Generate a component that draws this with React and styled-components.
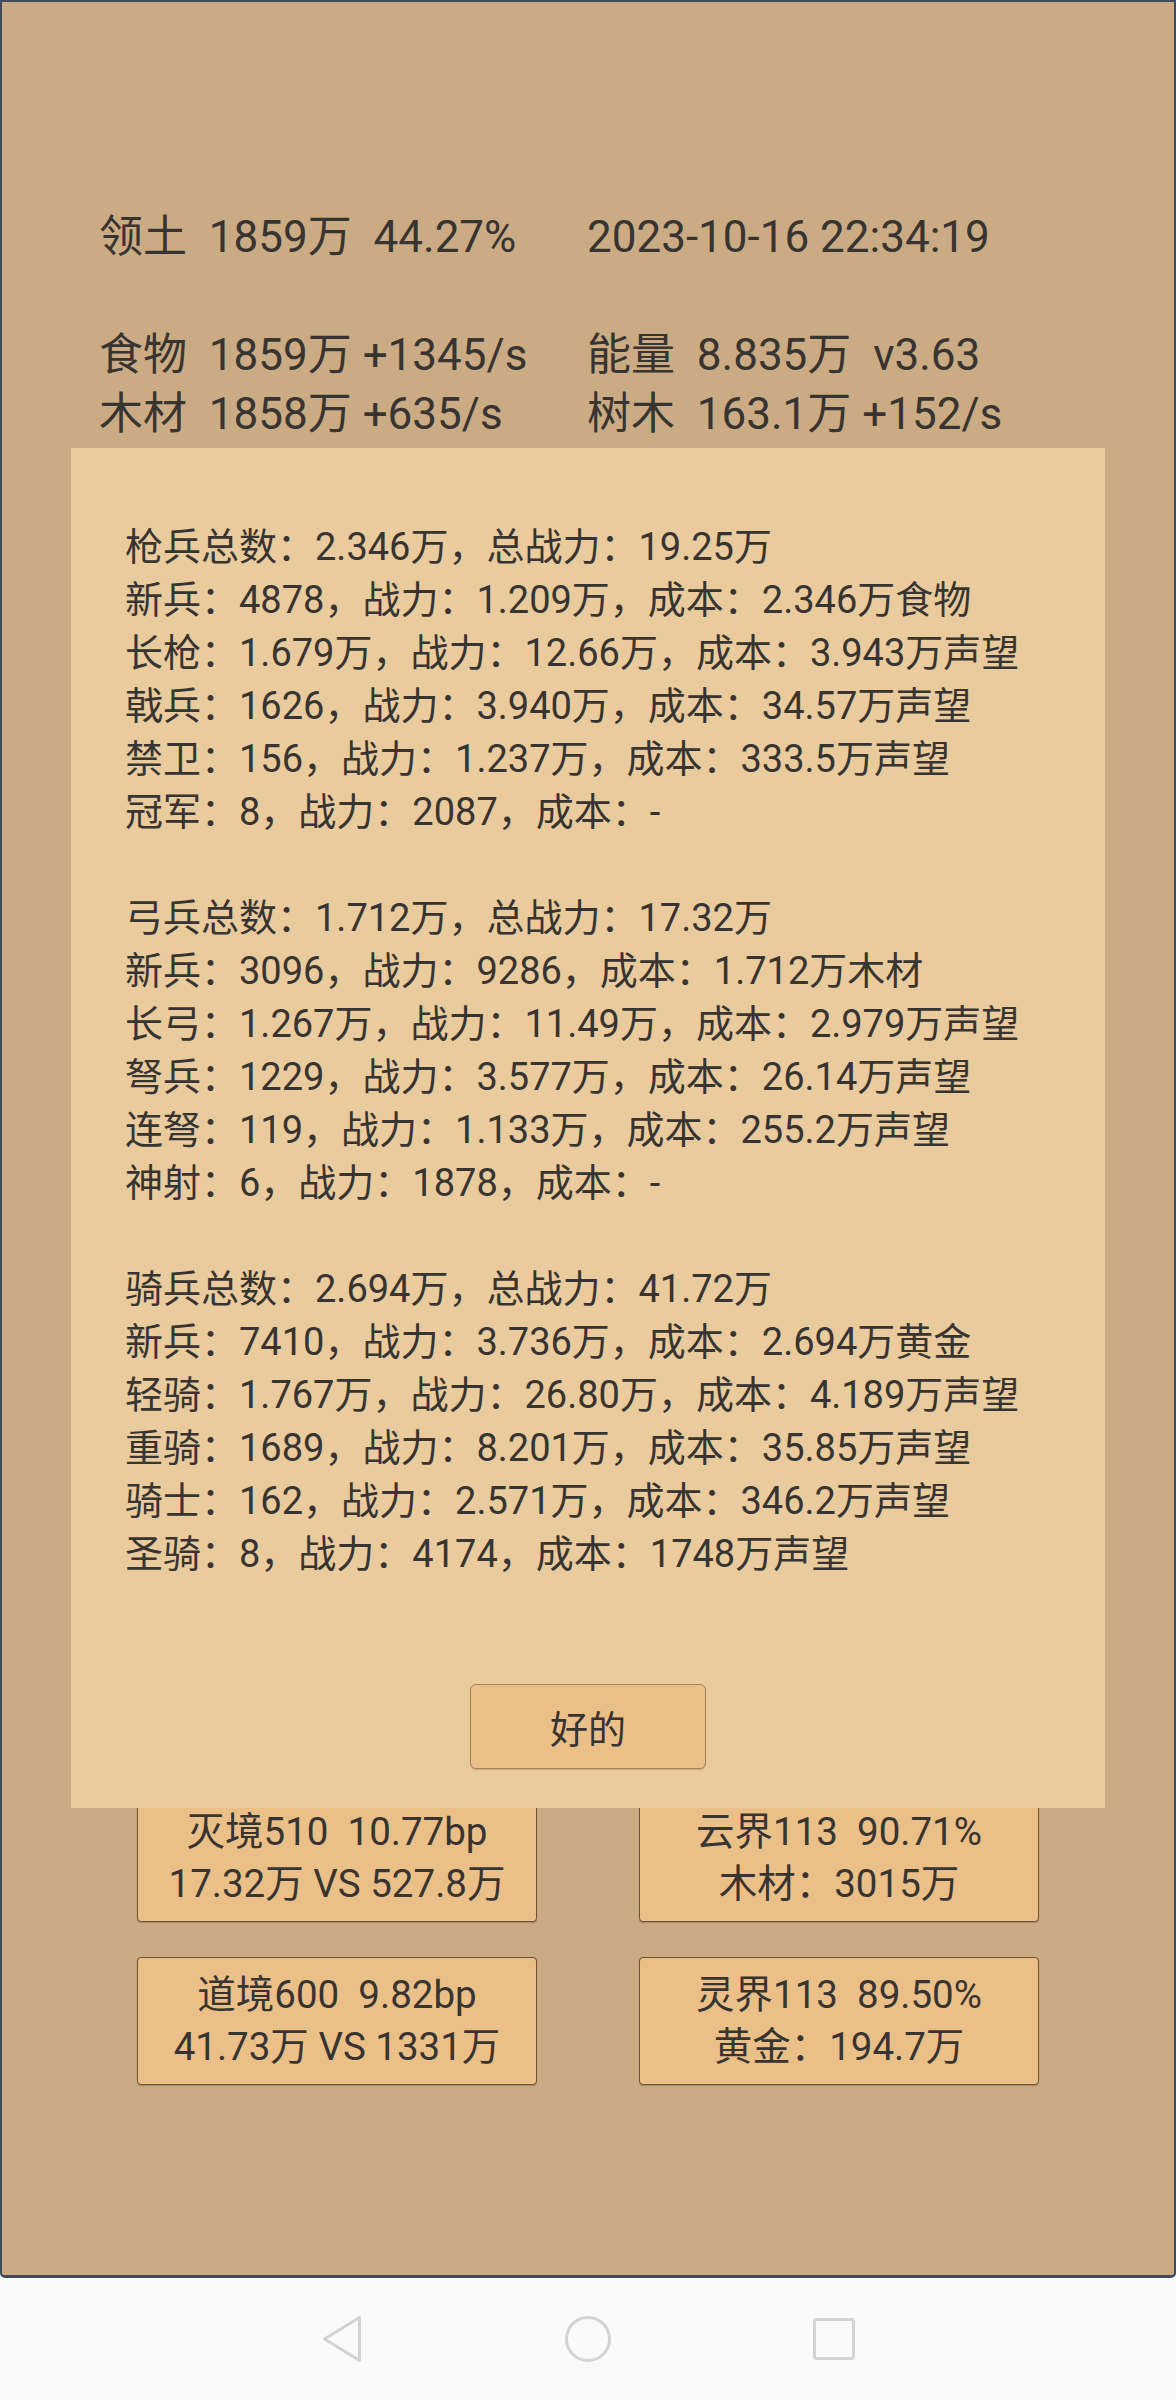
import React from "react";
import styled, { createGlobalStyle } from "styled-components";

const GlobalStyle = createGlobalStyle`
  html, body { margin: 0; padding: 0; background: #fafafa; }
  body { font-family: Roboto, "Noto Sans CJK SC", sans-serif; color: #373431; }
  * { box-sizing: border-box; }
`;

const Screen = styled.div`
  width: 1176px;
  display: flex;
  flex-direction: column;
`;

const Frame = styled.div`
  position: relative;
  height: 2278px;
  background: #cbab83;
  border: 2px solid #3f4a5b;
  border-bottom-width: 3px;
  border-radius: 0 0 5px 5px;
`;

const StatGrid = styled.div`
  display: grid;
  grid-template-columns: 488px 488px;
  padding-left: 97px;
  margin-top: ${(p) => p.$top}px;
  font-size: 44px;
  line-height: 59px;
  white-space: pre;
`;

const Stat = styled.div``;

const CardGrid = styled.div`
  display: grid;
  grid-template-columns: 400px 400px;
  column-gap: 102px;
  row-gap: 35px;
  padding-left: 135px;
  margin-top: 1350px;
`;

const Card = styled.div`
  height: 128px;
  display: flex;
  flex-direction: column;
  justify-content: center;
  align-items: center;
  background: #ebc088;
  border: 1px solid #6e5234;
  border-radius: 4px;
  box-shadow: 0 1px 1px rgba(60, 40, 20, 0.25);
  font-size: 38.5px;
  line-height: 52px;
  white-space: pre;
`;

const Modal = styled.div`
  position: absolute;
  left: 69px;
  top: 446px;
  width: 1034px;
  height: 1360px;
  background: #e9cb9e;
  padding: 73px 0 0 54px;
  display: flex;
  flex-direction: column;
`;

const Block = styled.div`
  font-size: 38px;
  line-height: 53px;
  margin-bottom: ${(p) => (p.$last ? 0 : 53)}px;
  white-space: pre;
`;

const Line = styled.div``;

const OkButton = styled.button`
  align-self: center;
  margin: 103px 0 0 -54px;
  width: 236px;
  height: 85px;
  background: #ebc088;
  border: 1px solid #a4825a;
  border-radius: 6px;
  box-shadow: 0 1px 1px rgba(60, 40, 20, 0.2);
  font-family: Roboto, "Noto Sans CJK SC", sans-serif;
  font-size: 38px;
  color: #373431;
  padding: 0;
`;

const NavBar = styled.div`
  height: 122px;
  background: #fafafa;
  display: flex;
  justify-content: center;
  align-items: center;
  gap: 198px;
`;

const NavIcon = styled.svg`
  width: 48px;
  height: 48px;
  fill: none;
  stroke: #d3d3d3;
  stroke-width: 3;
  stroke-linejoin: round;
`;

const blocks = [
  [
    "枪兵总数：2.346万，总战力：19.25万",
    "新兵：4878，战力：1.209万，成本：2.346万食物",
    "长枪：1.679万，战力：12.66万，成本：3.943万声望",
    "戟兵：1626，战力：3.940万，成本：34.57万声望",
    "禁卫：156，战力：1.237万，成本：333.5万声望",
    "冠军：8，战力：2087，成本：-",
  ],
  [
    "弓兵总数：1.712万，总战力：17.32万",
    "新兵：3096，战力：9286，成本：1.712万木材",
    "长弓：1.267万，战力：11.49万，成本：2.979万声望",
    "弩兵：1229，战力：3.577万，成本：26.14万声望",
    "连弩：119，战力：1.133万，成本：255.2万声望",
    "神射：6，战力：1878，成本：-",
  ],
  [
    "骑兵总数：2.694万，总战力：41.72万",
    "新兵：7410，战力：3.736万，成本：2.694万黄金",
    "轻骑：1.767万，战力：26.80万，成本：4.189万声望",
    "重骑：1689，战力：8.201万，成本：35.85万声望",
    "骑士：162，战力：2.571万，成本：346.2万声望",
    "圣骑：8，战力：4174，成本：1748万声望",
  ],
];

const cards = [
  ["灭境510  10.77bp", "17.32万 VS 527.8万"],
  ["云界113  90.71%", "木材：3015万"],
  ["道境600  9.82bp", "41.73万 VS 1331万"],
  ["灵界113  89.50%", "黄金：194.7万"],
];

export default function App() {
  return (
    <Screen>
      <GlobalStyle />
      <Frame>
        <StatGrid $top={206}>
          <Stat>领土  1859万  44.27%</Stat>
          <Stat>2023-10-16 22:34:19</Stat>
        </StatGrid>
        <StatGrid $top={59}>
          <Stat>食物  1859万 +1345/s</Stat>
          <Stat>能量  8.835万  v3.63</Stat>
          <Stat>木材  1858万 +635/s</Stat>
          <Stat>树木  163.1万 +152/s</Stat>
        </StatGrid>
        <CardGrid>
          {cards.map((c, i) => (
            <Card key={i}>
              <Line>{c[0]}</Line>
              <Line>{c[1]}</Line>
            </Card>
          ))}
        </CardGrid>
        <Modal>
          {blocks.map((b, i) => (
            <Block key={i} $last={i === blocks.length - 1}>
              {b.map((l, j) => (
                <Line key={j}>{l}</Line>
              ))}
            </Block>
          ))}
          <OkButton>好的</OkButton>
        </Modal>
      </Frame>
      <NavBar>
        <NavIcon viewBox="0 0 48 48">
          <path d="M41.5 2.5 L6.5 24 L41.5 45.5 Z" />
        </NavIcon>
        <NavIcon viewBox="0 0 48 48">
          <circle cx="24" cy="24" r="21.5" />
        </NavIcon>
        <NavIcon viewBox="0 0 48 48">
          <rect x="4.5" y="4.5" width="39" height="39" rx="2" />
        </NavIcon>
      </NavBar>
    </Screen>
  );
}
